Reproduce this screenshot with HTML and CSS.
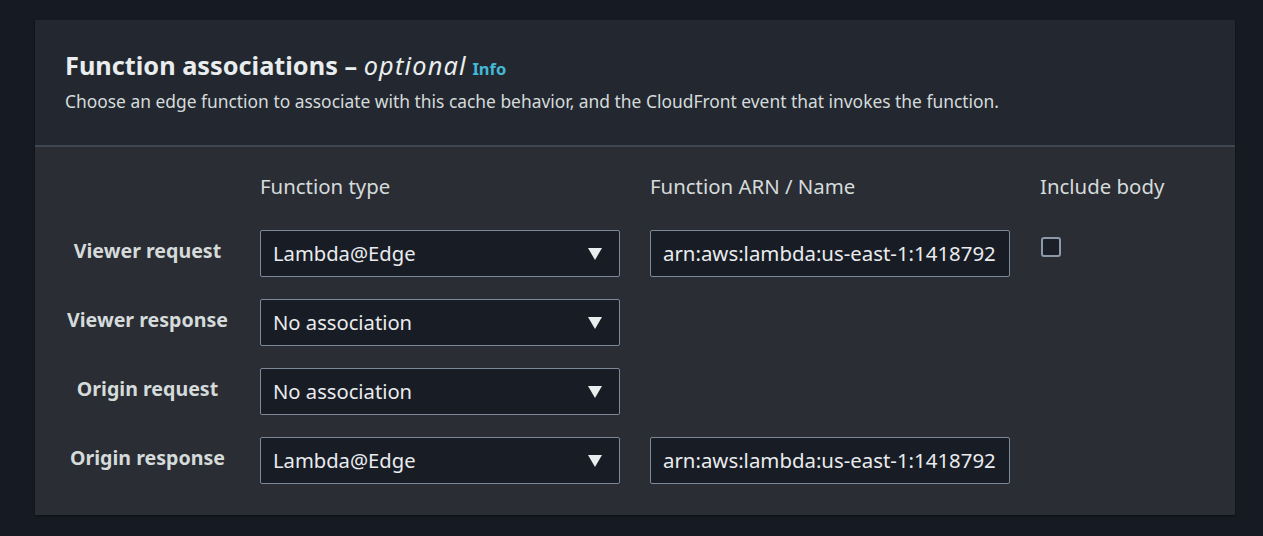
FILE: index.html
```html
<!DOCTYPE html>
<html>
<head>
<meta charset="utf-8">
<link rel="stylesheet" href="styles.css">
</head>
<body>
<section class="panel">
  <header class="panel-head">
    <h2 class="title">Function associations – <em>optional</em> <a class="info">Info</a></h2>
    <p class="desc">Choose an edge function to associate with this cache behavior, and the CloudFront event that invokes the function.</p>
  </header>
  <div class="panel-body">
    <div class="grid">
      <div></div>
      <div class="colhead">Function type</div>
      <div class="colhead">Function ARN / Name</div>
      <div class="colhead">Include body</div>

      <div class="rowlabel">Viewer request</div>
      <div class="select"><span>Lambda@Edge</span><span class="caret"></span></div>
      <div class="input">arn:aws:lambda:us-east-1:1418792</div>
      <div class="checkcell"><span class="checkbox"></span></div>

      <div class="rowlabel">Viewer response</div>
      <div class="select"><span>No association</span><span class="caret"></span></div>
      <div></div>
      <div></div>

      <div class="rowlabel">Origin request</div>
      <div class="select"><span>No association</span><span class="caret"></span></div>
      <div></div>
      <div></div>

      <div class="rowlabel">Origin response</div>
      <div class="select"><span>Lambda@Edge</span><span class="caret"></span></div>
      <div class="input">arn:aws:lambda:us-east-1:1418792</div>
      <div></div>
    </div>
  </div>
</section>
</body>
</html>
```
FILE: styles.css
```css
* { box-sizing: border-box; }
html, body { margin: 0; padding: 0; }
body {
  background: #161a22;
  font-family: "Noto Sans", "Open Sans", sans-serif;
  color: #d5dbdb;
  padding: 20px 28px 21px 35px;
  height: 536px;
}
.panel {
  width: 1200px;
  background: #2a2d33;
  box-shadow: 0 1px 2px rgba(0,0,0,0.5);
}
.panel-head {
  background: #232830;
  padding: 28px 30px 24px 30px;
  border-bottom: 2px solid #414750;
  height: 127px;
}
.title {
  margin: 0;
  font-size: 25.3px;
  font-weight: 700;
  line-height: 34px;
  color: #eaeded;
  white-space: nowrap;
}
.title em { font-weight: 400; font-style: italic; letter-spacing: 1.2px; }
.info {
  font-size: 16.5px;
  color: #44b9d6;
  font-weight: 700;
  margin-left: -1px;
}
.desc {
  margin: 3px 0 0 0;
  font-size: 17.4px;
  line-height: 24px;
  color: #d5dbdb;
  white-space: nowrap;
}
.panel-body {
  padding: 25px 0 31px 0;
}
.grid {
  display: grid;
  grid-template-columns: 225px 390px 390px 1fr;
  row-gap: 22px;
}
.colhead {
  font-size: 20.4px;
  line-height: 28px;
  color: #d5dbdb;
  margin-bottom: 8px;
  white-space: nowrap;
}
.rowlabel {
  text-align: center;
  font-weight: 700;
  font-size: 19.6px;
  line-height: 26px;
  padding-top: 8px;
  color: #d5dbdb;
  white-space: nowrap;
}
.select, .input {
  width: 360px;
  height: 47px;
  border: 1px solid #7d8998;
  border-radius: 2px;
  background: #181c25;
  font-size: 20.2px;
  color: #e9ebed;
  display: flex;
  align-items: center;
  padding: 0 12px 2px 12px;
}
.select { justify-content: space-between; padding-right: 17px; }
.caret {
  width: 0; height: 0;
  margin-top: 2px;
  border-left: 7px solid transparent;
  border-right: 7px solid transparent;
  border-top: 12px solid #eaeded;
}
.input { white-space: nowrap; overflow: hidden; font-size: 20.4px; }
.checkcell { padding-top: 7px; padding-left: 1px; }
.checkbox {
  display: block;
  width: 20px; height: 20px;
  border: 2px solid #8d99a8;
  border-radius: 3px;
  background: #1a1f28;
}
```
